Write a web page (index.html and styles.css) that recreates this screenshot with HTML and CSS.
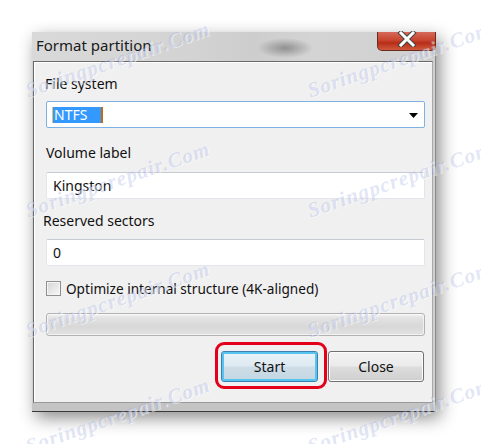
FILE: index.html
```html
<!DOCTYPE html>
<html>
<head>
<meta charset="utf-8">
<link rel="stylesheet" href="styles.css">
</head>
<body>
<div class="stage">
  <div class="window">
    <div class="titlebar">
      <span class="title">Format partition</span>
      <div class="close-x">
        <svg width="22" height="16" viewBox="0 0 22 16"><path d="M5 2 L17 14 M17 2 L5 14" stroke="#444" stroke-width="5" stroke-linecap="square"/><path d="M5 2 L17 14 M17 2 L5 14" stroke="#fff" stroke-width="3" stroke-linecap="square"/></svg>
      </div>
    </div>
    <div class="client">
      <div class="label">File system</div>
      <div class="combo">
        <span class="sel">NTFS</span>
        <svg class="arrow" width="9" height="5" viewBox="0 0 9 5"><path d="M0 0 H9 L4.5 5 Z" fill="#000"/></svg>
      </div>
      <div class="label l2">Volume label</div>
      <div class="textbox">Kingston</div>
      <div class="label l3">Reserved sectors</div>
      <div class="textbox">0</div>
      <div class="check-row">
        <span class="checkbox"></span>
        <span class="check-text">Optimize internal structure (4K-aligned)</span>
      </div>
      <div class="progress"></div>
      <div class="buttons">
        <div class="btn-wrap">
          <button class="btn btn-default">Start</button>
          <span class="highlight"></span>
        </div>
        <button class="btn">Close</button>
      </div>
    </div>
    <div class="frame-bottom"></div>
  </div>
  <span class="wm wm1">Soringpcrepair.Com</span>
  <span class="wm wm2">Soringpcrepair.Com</span>
  <span class="wm wm3">Soringpcrepair.Com</span>
  <span class="wm wm4">Soringpcrepair.Com</span>
  <span class="wm wm5">Soringpcrepair.Com</span>
  <span class="wm wm6">Soringpcrepair.Com</span>
  <span class="wm wm7">Soringpcrepair.Com</span>
  <span class="wm wm8">Soringpcrepair.Com</span>
</div>
</body>
</html>
```
FILE: styles.css
```css
html, body {
  margin: 0;
  padding: 0;
  background: #ffffff;
}
body {
  font-family: "Noto Sans", "Open Sans", sans-serif;
  font-size: 14px;
  color: #111;
}
.stage {
  position: relative;
  width: 481px;
  height: 444px;
  overflow: hidden;
  padding: 32px 0 0 32px;
  box-sizing: border-box;
}
.window {
  width: 404px;
  height: 380px;
  background: #cfcfcf;
  box-shadow: 4px 6px 16px rgba(0,0,0,0.45);
  display: flex;
  flex-direction: column;
  border-right: 1px solid #8a8a8a;
  box-sizing: border-box;
}
.titlebar {
  height: 29px;
  display: flex;
  justify-content: space-between;
  align-items: flex-start;
  background:
    radial-gradient(ellipse 28px 10px at 253px 16px, rgba(90,90,90,0.55), rgba(90,90,90,0) 100%),
    linear-gradient(to right, #d9d9d9 0%, #d3d3d3 40%, #cdcdcd 55%, #d4d4d4 70%, #d0d0d0 100%);
  flex: none;
}
.title {
  font-size: 15px;
  line-height: 18px;
  margin: 4px 0 0 4px;
  color: #1a1a1a;
}
.close-x {
  width: 59px;
  height: 19px;
  margin-right: -1px;
  background: linear-gradient(to bottom, #d56a5a 0%, #c8452f 45%, #b72d17 60%, #cf5a3c 100%);
  border: 1px solid #6b2a20;
  border-top: none;
  border-radius: 0 0 5px 5px;
  box-sizing: border-box;
  display: flex;
  justify-content: center;
  align-items: flex-start;
}
.close-x svg { margin-top: -1px; }
.client {
  flex: 1;
  margin-left: 1px;
  margin-right: 2px;
  background: #f0f0f0;
  border: 1px solid #6a6a6a;
  border-right-color: #a8a8a8;
  border-bottom-color: #9a9a9a;
  box-shadow: inset 1px 1px 0 #ffffff;
  padding: 13px 7px 0 11px;
  display: flex;
  flex-direction: column;
}
.label {
  line-height: 18px;
  font-size: 14px;
}
.l2 { margin-top: 16px; margin-left: 1px; }
.l3 { margin-top: 13px; margin-left: -2px; }
.combo {
  margin-top: 8px;
  margin-left: 1px;
  height: 27px;
  border: 1px solid #7fb2e4;
  border-radius: 2px;
  background: #fff;
  box-sizing: border-box;
  display: flex;
  align-items: center;
  justify-content: space-between;
  padding: 0 6px 0 5px;
}
.sel {
  background: #3399ff;
  color: #fff;
  line-height: 16px;
  width: 47px;
  padding-left: 1px;
  border-left: 1px solid #e8c070;
  border-right: 2px solid #c86a10;
  font-size: 14px;
}
.arrow { margin-top: 2px; }
.textbox {
  margin-top: 10px;
  margin-left: 1px;
  height: 27px;
  background: #fff;
  border: 1px solid #e2e6ec;
  border-top-color: #c6cbd3;
  border-radius: 2px;
  box-sizing: border-box;
  line-height: 25px;
  padding-left: 6px;
}
.l3 + .textbox { margin-top: 9px; }
.check-row {
  margin-top: 13px;
  height: 18px;
  display: flex;
  align-items: center;
  gap: 5px;
  margin-left: 1px;
}
.check-text { font-size: 13.6px; }
.checkbox {
  width: 15px;
  height: 15px;
  box-sizing: border-box;
  border: 1px solid #8e8f8f;
  background: linear-gradient(135deg, #d4d4d4 0%, #eaeaea 60%, #f8f8f8 100%);
  box-shadow: inset 0 0 0 1px #f4f4f4;
}
.progress {
  margin-top: 16px;
  margin-left: 1px;
  height: 23px;
  border: 1px solid #b2b2b2;
  border-radius: 3px;
  box-sizing: border-box;
  background: linear-gradient(to bottom, #f3f3f3 0%, #e2e2e2 20%, #d8d8d8 60%, #e2e2e2 100%);
  box-shadow: inset 0 0 0 1px rgba(255,255,255,0.6);
}
.buttons {
  margin-top: 15px;
  display: flex;
  justify-content: flex-end;
  gap: 10px;
  margin-right: 1px;
}
.btn-wrap {
  position: relative;
  display: flex;
}
.btn {
  width: 96px;
  height: 31px;
  font-family: "Noto Sans", "Open Sans", sans-serif;
  font-size: 14px;
  color: #111;
  border: 1px solid #707070;
  border-radius: 3px;
  background: linear-gradient(to bottom, #f2f2f2 0%, #ebebeb 49%, #dddddd 51%, #cfcfcf 100%);
  box-shadow: inset 0 0 0 1px #fcfcfc;
  padding: 0;
}
.btn-default {
  width: 97px;
  border-color: #3c7fb1;
  background: linear-gradient(to bottom, #eaf3f8 0%, #dde9f0 49%, #cddde8 51%, #c3d6e2 100%);
  box-shadow: inset 0 0 0 2px #56c4ee;
}
.highlight {
  position: absolute;
  left: -6px;
  right: -9px;
  top: -9px;
  bottom: -7px;
  border: 3px solid #e3001b;
  border-radius: 9px;
  pointer-events: none;
}
.frame-bottom {
  height: 9px;
  flex: none;
  background: #c4c4c4;
  border-bottom: 1px solid #3a3a3a;
  box-sizing: border-box;
}
.wm {
  position: absolute;
  font-family: "Liberation Serif", serif;
  font-style: italic;
  font-weight: bold;
  font-size: 21px;
  letter-spacing: 1px;
  color: rgba(125,145,215,0.24);
  text-shadow: 1px 1px 0 rgba(255,255,255,0.5);
  transform: translate(-50%, -50%) rotate(-19deg);
  white-space: nowrap;
  pointer-events: none;
}
.wm1 { left: 118px; top: 60px; }
.wm2 { left: 400px; top: 60px; }
.wm3 { left: 118px; top: 180px; }
.wm4 { left: 400px; top: 180px; }
.wm5 { left: 118px; top: 300px; }
.wm6 { left: 400px; top: 300px; }
.wm7 { left: 118px; top: 416px; }
.wm8 { left: 400px; top: 416px; }
```
